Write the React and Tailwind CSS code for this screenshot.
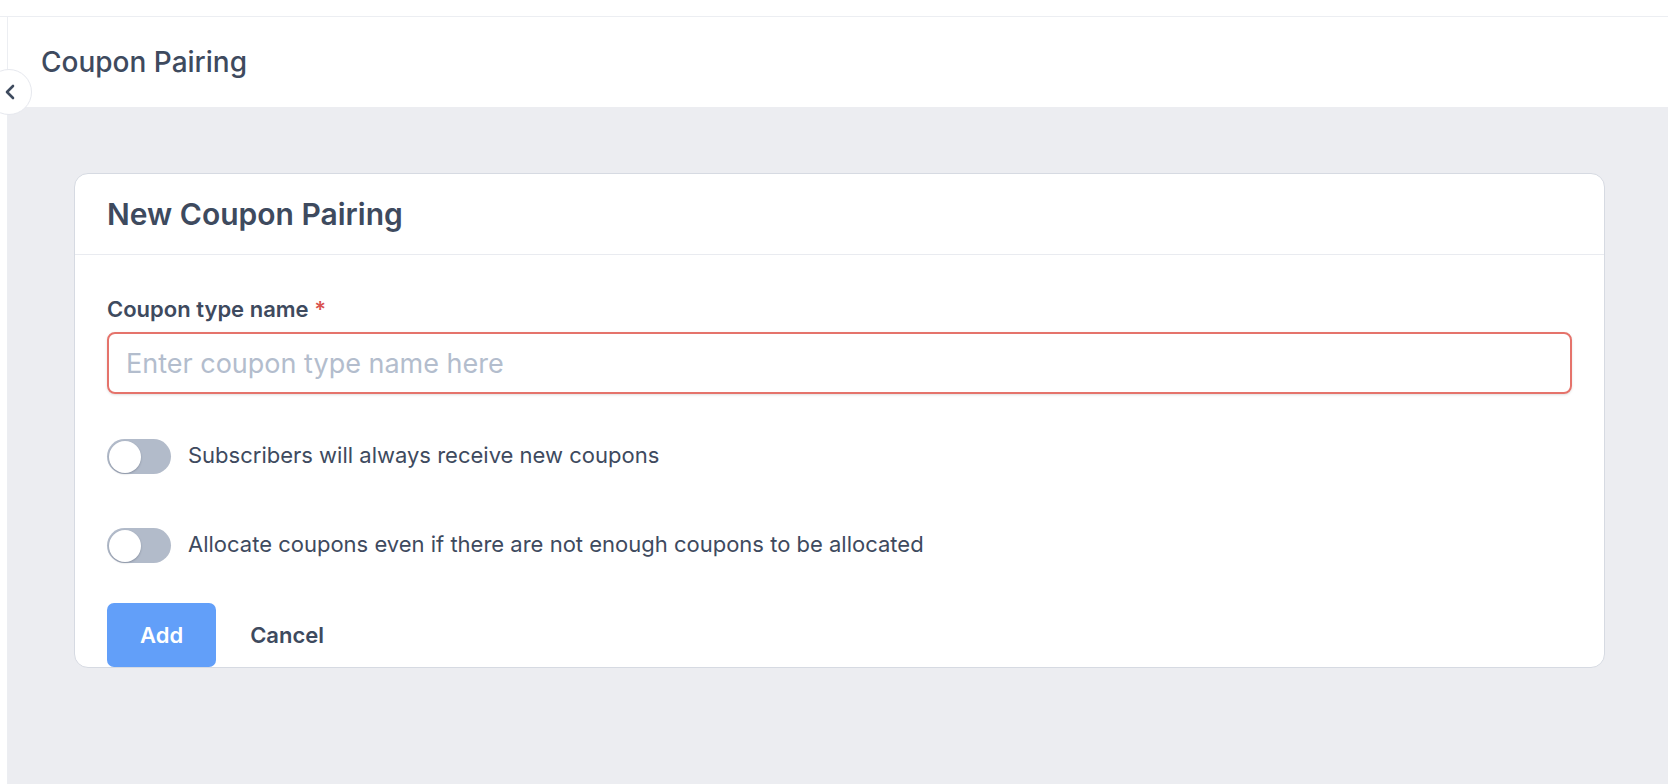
import { ChevronLeft } from "lucide-react";

const Toggle = () => (
  <span className="inline-flex h-[35px] w-[64px] shrink-0 items-center rounded-full bg-[#b2bbca] px-[1.5px]">
    <span className="size-[32px] rounded-full bg-white shadow-[0_1px_2px_rgba(15,23,42,0.25)]" />
  </span>
);

const ToggleRow = ({ label, className = "" }) => (
  <label className={`flex items-center gap-[17px] ${className}`}>
    <Toggle />
    <span className="text-[22px] leading-[33px] text-[#3e4a5e] mb-[2px]">{label}</span>
  </label>
);

export default function App() {
  return (
    <div className="relative flex h-screen w-full flex-col overflow-hidden bg-white font-[Inter,'Liberation_Sans',sans-serif] text-[#3e4a5e]">
      {/* top strip */}
      <div className="h-[17px] shrink-0 border-b-[1.5px] border-[#eceef2]" />

      <div className="flex flex-1">
        {/* collapsed sidebar */}
        <aside className="w-[8px] shrink-0 border-r border-[#eceef2] bg-white" />

        <main className="flex flex-1 flex-col">
          <header className="flex h-[90px] shrink-0 items-center bg-white pl-[33px]">
            <h1 className="text-[28px] font-medium">Coupon Pairing</h1>
          </header>

          <section className="flex-1 bg-[#ecedf1] pl-[66px] pr-[63px] pt-[66px]">
            <div className="rounded-[14px] border border-[#d6dae2] bg-white">
              <div className="flex h-[81px] items-center border-b border-[#e9ebf0] px-[32px]">
                <h2 className="text-[30px] font-semibold">New Coupon Pairing</h2>
              </div>

              <form className="flex flex-col px-[32px] pt-[38px]">
                <label className="text-[22px] font-semibold leading-[33px]">
                  Coupon type name <span className="text-[#d9534f]">*</span>
                </label>
                <input
                  type="text"
                  placeholder="Enter coupon type name here"
                  className="mt-[6px] h-[62px] w-full rounded-[8px] border-2 border-[#e5736b] px-[17px] text-[27px] shadow-sm outline-none placeholder:text-[#b3bdcd]"
                />

                <ToggleRow className="mt-[45px]" label="Subscribers will always receive new coupons" />
                <ToggleRow
                  className="mt-[54px]"
                  label="Allocate coupons even if there are not enough coupons to be allocated"
                />

                <div className="mt-[40px] flex items-center gap-[2px]">
                  <button
                    type="button"
                    className="h-[64px] rounded-[7px] bg-[#629ff9] px-[33px] text-[22px] font-semibold text-white"
                  >
                    Add
                  </button>
                  <button type="button" className="h-[64px] px-[32px] text-[22px] font-semibold text-[#3e4a5e]">
                    Cancel
                  </button>
                </div>
              </form>
            </div>
          </section>
        </main>
      </div>

      {/* sidebar collapse handle */}
      <button
        type="button"
        className="absolute left-[-14px] top-[69px] flex size-[46px] items-center justify-center rounded-full border-[1.5px] border-[#e6e8ee] bg-white pl-[2px]"
      >
        <ChevronLeft className="size-[24px] text-[#3e4a5e]" strokeWidth={2.6} />
      </button>
    </div>
  );
}
